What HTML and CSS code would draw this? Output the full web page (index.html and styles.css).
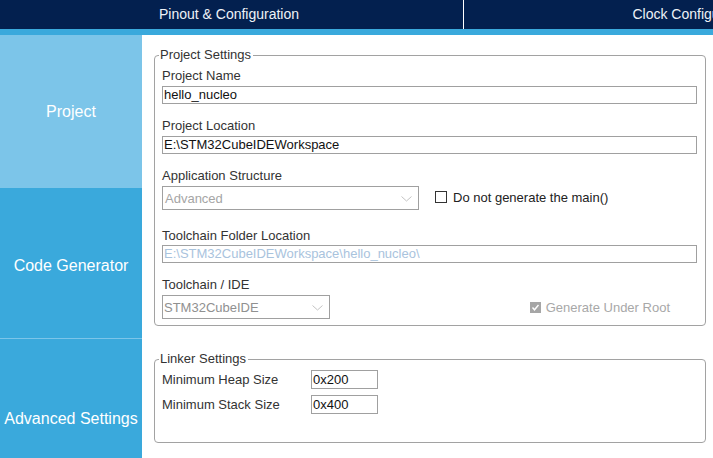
FILE: index.html
```html
<!DOCTYPE html>
<html>
<head>
<meta charset="utf-8">
<link rel="stylesheet" href="styles.css">
</head>
<body>
<div class="app">
  <div class="tabs">
    <div class="tab tab-first">Pinout &amp; Configuration</div>
    <div class="tab tab-second">Clock Configuration</div>
  </div>
  <div class="strip"></div>
  <div class="main">
    <div class="sidebar">
      <div class="nav nav-active">Project</div>
      <div class="nav nav-code">Code Generator</div>
      <div class="nav nav-adv">Advanced Settings</div>
    </div>
    <div class="content">
      <div class="group group-project">
        <div class="group-title">Project Settings</div>
        <div class="label l1">Project Name</div>
        <div class="input">hello_nucleo</div>
        <div class="label l2">Project Location</div>
        <div class="input">E:\STM32CubeIDEWorkspace</div>
        <div class="label l3">Application Structure</div>
        <div class="row">
          <div class="combo combo-app">
            <span class="combo-text">Advanced</span>
            <svg class="chev" width="11" height="6" viewBox="0 0 11 6"><polyline points="0.5,0.5 5.5,5 10.5,0.5" fill="none" stroke="#c4c4c4" stroke-width="1"/></svg>
          </div>
          <div class="check-item">
            <span class="box"></span>
            <span class="check-text">Do not generate the main()</span>
          </div>
        </div>
        <div class="label l4">Toolchain Folder Location</div>
        <div class="input input-disabled">E:\STM32CubeIDEWorkspace\hello_nucleo\</div>
        <div class="label l5">Toolchain / IDE</div>
        <div class="row">
          <div class="combo combo-ide">
            <span class="combo-text combo-text-ide">STM32CubeIDE</span>
            <svg class="chev" width="11" height="6" viewBox="0 0 11 6"><polyline points="0.5,0.5 5.5,5 10.5,0.5" fill="none" stroke="#c4c4c4" stroke-width="1"/></svg>
          </div>
          <div class="check-item check-root">
            <span class="box box-on"><svg width="11" height="11" viewBox="0 0 11 11"><polyline points="2.5,5.5 4.5,7.8 8.5,3" fill="none" stroke="#fff" stroke-width="1.4"/></svg></span>
            <span class="check-text check-text-dis">Generate Under Root</span>
          </div>
        </div>
      </div>
      <div class="group group-linker">
        <div class="group-title">Linker Settings</div>
        <div class="lrow lrow1">
          <div class="llabel">Minimum Heap Size</div>
          <div class="sinput">0x200</div>
        </div>
        <div class="lrow lrow2">
          <div class="llabel">Minimum Stack Size</div>
          <div class="sinput">0x400</div>
        </div>
      </div>
    </div>
  </div>
</div>
</body>
</html>
```

FILE: styles.css
```css
html, body {
  margin: 0;
  padding: 0;
  background: #ffffff;
}
body {
  width: 713px;
  height: 458px;
  overflow: hidden;
  font-family: "Liberation Sans", Arial, sans-serif;
}
.app {
  width: 713px;
  height: 458px;
  display: flex;
  flex-direction: column;
  overflow: hidden;
}
.tabs {
  height: 29px;
  background: #03204f;
  display: flex;
  flex: none;
}
.tab {
  width: 463px;
  flex: none;
  box-sizing: border-box;
  color: #eef2f7;
  font-size: 14px;
  line-height: 29px;
  text-align: center;
  white-space: nowrap;
}
.tab-first {
  width: 464px;
  padding-right: 5px;
  border-right: 1px solid #ffffff;
}
.tab-second {
  padding-right: 4px;
}
.strip {
  height: 6px;
  background: #3aa9dc;
  flex: none;
}
.main {
  display: flex;
  flex: 1;
  min-height: 0;
}
.sidebar {
  width: 142px;
  flex: none;
  display: flex;
  flex-direction: column;
  background: #3aa9dc;
}
.nav {
  display: flex;
  align-items: center;
  justify-content: center;
  color: #ffffff;
  font-size: 16px;
  flex: none;
}
.nav-active {
  height: 153px;
  background: #7cc5e9;
  padding-top: 1px;
  box-sizing: border-box;
}
.nav-code {
  height: 150px;
  padding-top: 6px;
  box-sizing: border-box;
}
.nav-adv {
  height: 160px;
  border-top: 1px solid #7cc5e9;
}
.content {
  flex: 1;
  padding: 20px 7px 0 12px;
  display: flex;
  flex-direction: column;
}
.group {
  border: 1px solid #a2a2a2;
  border-radius: 4px;
  display: flex;
  flex-direction: column;
  padding: 0 8px 0 7px;
}
.group-project {
  height: 271px;
  box-sizing: border-box;
}
.group-linker {
  margin-top: 33px;
  height: 84px;
  box-sizing: border-box;
}
.group-title {
  align-self: flex-start;
  margin: -9px 0 0 -3px;
  padding: 0 2px 0 1px;
  background: #ffffff;
  font-size: 13px;
  line-height: 16px;
  height: 16px;
  color: #333333;
}
.label {
  font-size: 13px;
  line-height: 16px;
  height: 16px;
  color: #333333;
}
.l1 { margin-top: 5px; }
.l2 { margin-top: 14px; }
.l3 { margin-top: 14px; }
.l4 { margin-top: 18px; }
.l5 { margin-top: 14px; }
.input {
  margin-top: 2px;
  height: 18px;
  box-sizing: border-box;
  border: 1px solid #a0a0a0;
  font-size: 13px;
  line-height: 16px;
  padding-left: 1px;
  color: #111111;
  white-space: nowrap;
  overflow: hidden;
}
.input-disabled {
  margin-top: 1px;
  color: #a9c3dd;
}
.row {
  margin-top: 2px;
  display: flex;
  align-items: center;
}
.combo {
  height: 24px;
  box-sizing: border-box;
  border: 1px solid #a0a0a0;
  display: flex;
  align-items: center;
  justify-content: space-between;
  padding: 0 6px 0 2px;
  font-size: 13px;
}
.combo-app { width: 257px; }
.combo-ide { width: 168px; }
.combo-text {
  color: #a5a5a5;
}
.combo-text-ide {
  color: #909090;
  margin-left: -1px;
}
.chev {
  display: block;
  margin-top: 1px;
}
.check-item {
  display: flex;
  align-items: center;
  margin-left: 16px;
  margin-top: -2px;
}
.box {
  width: 12px;
  height: 12px;
  box-sizing: border-box;
  border: 1px solid #333333;
  background: #ffffff;
  display: block;
}
.box-on {
  width: 11px;
  height: 11px;
  border: none;
  background: #a6a6a6;
}
.box-on svg { display: block; }
.check-text {
  font-size: 13px;
  color: #222222;
  margin-left: 6px;
}
.check-text-dis {
  color: #a8a8a8;
  margin-left: 5px;
}
.check-root {
  margin-left: auto;
  margin-right: 27px;
  margin-top: 0;
}
.lrow {
  display: flex;
  align-items: center;
}
.lrow1 { margin-top: 3px; }
.lrow2 { margin-top: 6px; }
.llabel {
  width: 149px;
  font-size: 13px;
  color: #333333;
}
.sinput {
  width: 67px;
  height: 19px;
  box-sizing: border-box;
  border: 1px solid #a0a0a0;
  font-size: 13px;
  line-height: 17px;
  padding-left: 1px;
  color: #111111;
}
```
